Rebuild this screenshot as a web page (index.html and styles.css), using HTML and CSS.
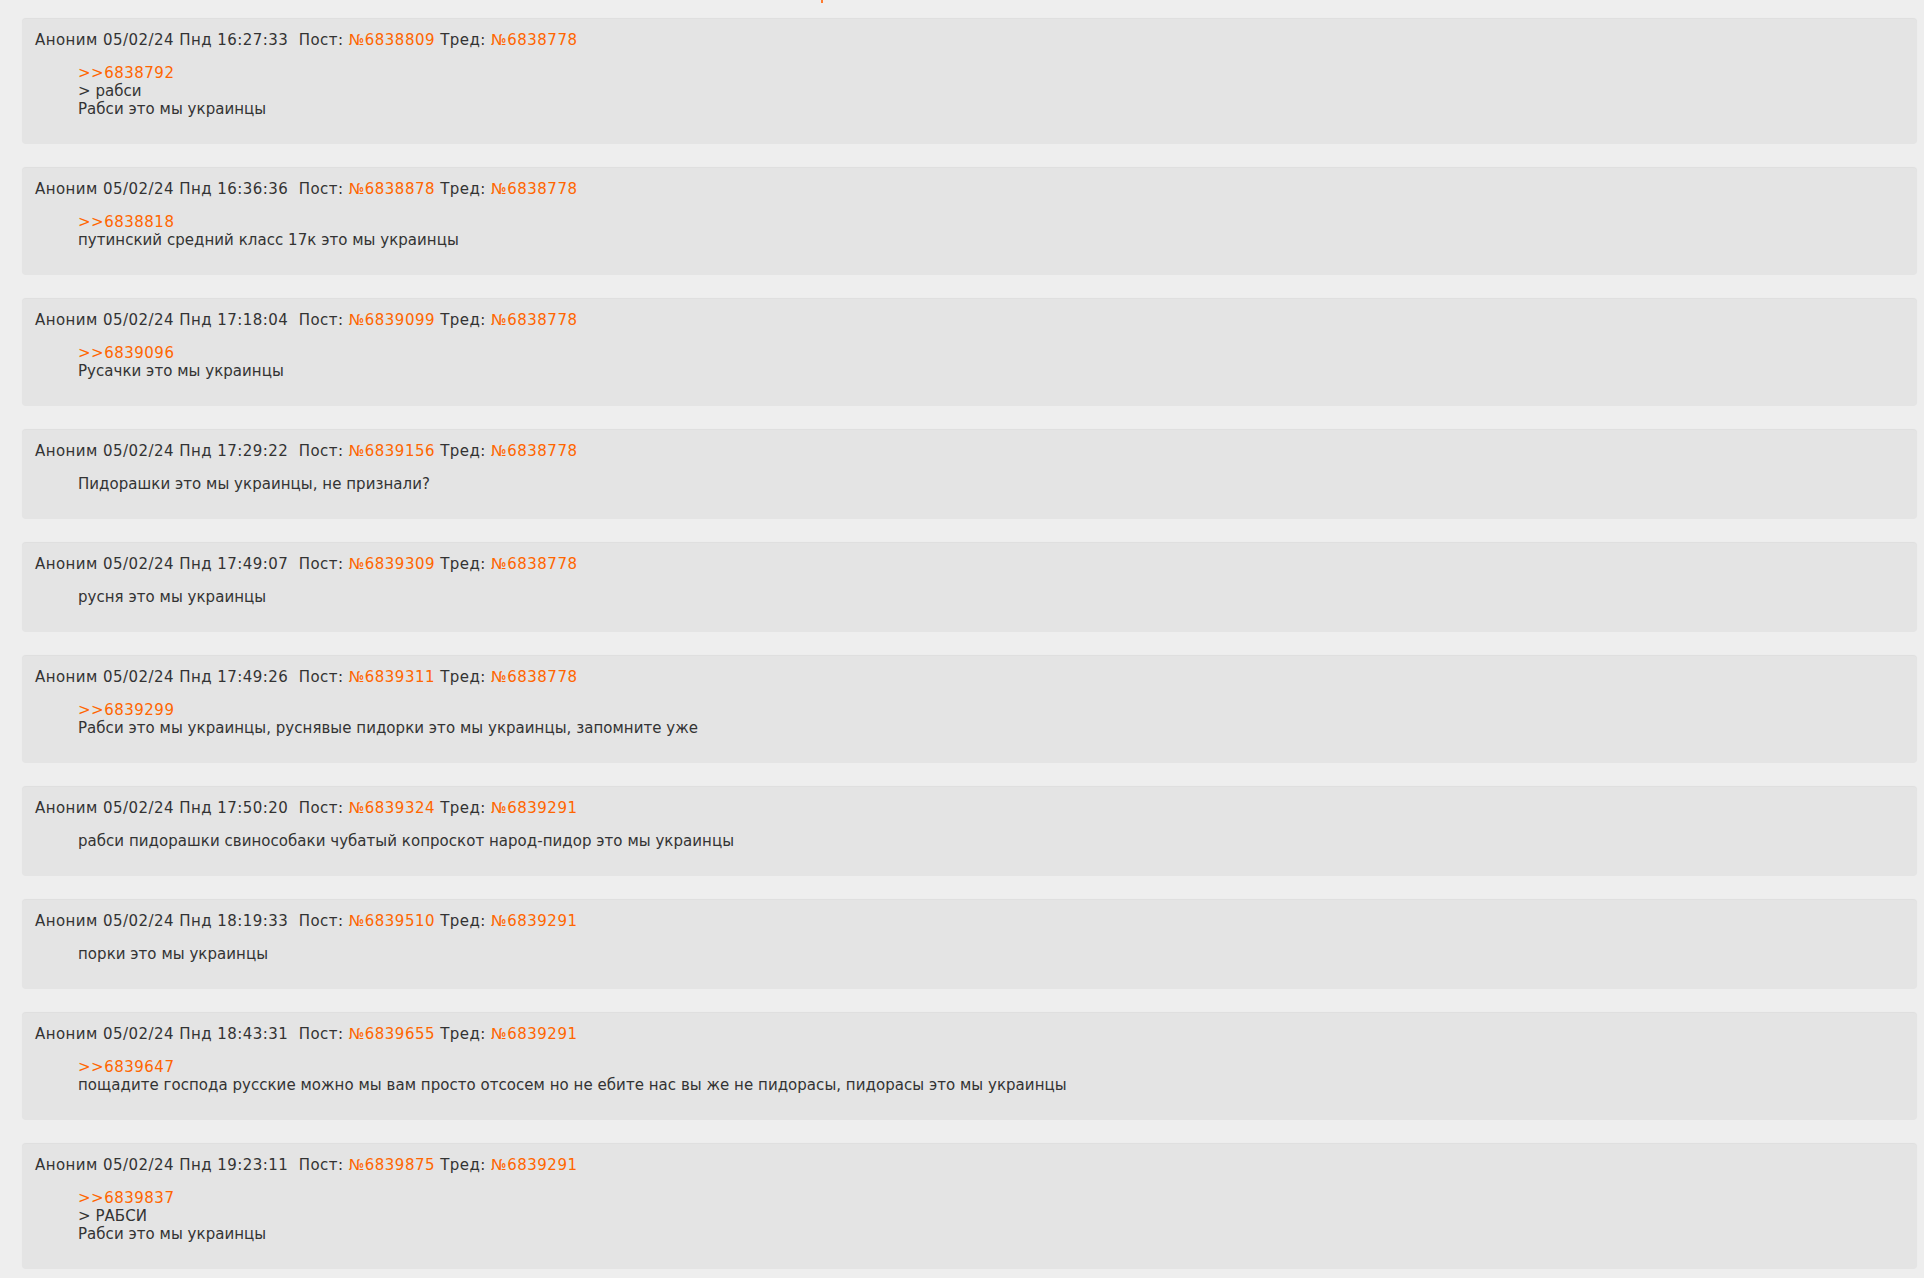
FILE: index.html
```html
<!DOCTYPE html>
<html lang="ru">
<head>
<meta charset="utf-8">
<title>Посты</title>
<link rel="stylesheet" href="styles.css">
</head>
<body>
<span class="top-mark"></span>
<div class="posts">
  <div class="post">
    <div class="post-head">Аноним 05/02/24 Пнд 16:27:33&nbsp; Пост: <a class="link">№6838809</a> Тред: <a class="link">№6838778</a></div>
    <div class="post-body">
      <a class="link">&gt;&gt;6838792</a><br>
      &gt; рабси<br>
      Рабси это мы украинцы
    </div>
  </div>
  <div class="post">
    <div class="post-head">Аноним 05/02/24 Пнд 16:36:36&nbsp; Пост: <a class="link">№6838878</a> Тред: <a class="link">№6838778</a></div>
    <div class="post-body">
      <a class="link">&gt;&gt;6838818</a><br>
      путинский средний класс 17к это мы украинцы
    </div>
  </div>
  <div class="post">
    <div class="post-head">Аноним 05/02/24 Пнд 17:18:04&nbsp; Пост: <a class="link">№6839099</a> Тред: <a class="link">№6838778</a></div>
    <div class="post-body">
      <a class="link">&gt;&gt;6839096</a><br>
      Русачки это мы украинцы
    </div>
  </div>
  <div class="post">
    <div class="post-head">Аноним 05/02/24 Пнд 17:29:22&nbsp; Пост: <a class="link">№6839156</a> Тред: <a class="link">№6838778</a></div>
    <div class="post-body">
      Пидорашки это мы украинцы, не признали?
    </div>
  </div>
  <div class="post">
    <div class="post-head">Аноним 05/02/24 Пнд 17:49:07&nbsp; Пост: <a class="link">№6839309</a> Тред: <a class="link">№6838778</a></div>
    <div class="post-body">
      русня это мы украинцы
    </div>
  </div>
  <div class="post">
    <div class="post-head">Аноним 05/02/24 Пнд 17:49:26&nbsp; Пост: <a class="link">№6839311</a> Тред: <a class="link">№6838778</a></div>
    <div class="post-body">
      <a class="link">&gt;&gt;6839299</a><br>
      Рабси это мы украинцы, руснявые пидорки это мы украинцы, запомните уже
    </div>
  </div>
  <div class="post">
    <div class="post-head">Аноним 05/02/24 Пнд 17:50:20&nbsp; Пост: <a class="link">№6839324</a> Тред: <a class="link">№6839291</a></div>
    <div class="post-body">
      рабси пидорашки свинособаки чубатый копроскот народ-пидор это мы украинцы
    </div>
  </div>
  <div class="post">
    <div class="post-head">Аноним 05/02/24 Пнд 18:19:33&nbsp; Пост: <a class="link">№6839510</a> Тред: <a class="link">№6839291</a></div>
    <div class="post-body">
      порки это мы украинцы
    </div>
  </div>
  <div class="post">
    <div class="post-head">Аноним 05/02/24 Пнд 18:43:31&nbsp; Пост: <a class="link">№6839655</a> Тред: <a class="link">№6839291</a></div>
    <div class="post-body">
      <a class="link">&gt;&gt;6839647</a><br>
      пощадите господа русские можно мы вам просто отсосем но не ебите нас вы же не пидорасы, пидорасы это мы украинцы
    </div>
  </div>
  <div class="post">
    <div class="post-head">Аноним 05/02/24 Пнд 19:23:11&nbsp; Пост: <a class="link">№6839875</a> Тред: <a class="link">№6839291</a></div>
    <div class="post-body">
      <a class="link">&gt;&gt;6839837</a><br>
      &gt; РАБСИ<br>
      Рабси это мы украинцы
    </div>
  </div>
</div>
</body>
</html>
```
FILE: styles.css
```css
html, body {
  margin: 0;
  background: #eeeeee;
}
body {
  font-family: "DejaVu Sans", Verdana, sans-serif;
  font-size: 15px;
  line-height: 18px;
  color: #333333;
  position: relative;
}
.top-mark {
  position: absolute;
  left: 821px;
  top: 0;
  width: 2px;
  height: 3px;
  background: #ff7a2e;
}
.posts {
  display: flex;
  flex-direction: column;
  gap: 24px;
  padding: 19px 7px 8px 22px;
}
.post {
  background: #e4e4e4;
  border-radius: 4px;
  box-shadow: 0 -1px 1px rgba(0, 0, 0, 0.07);
  padding: 12px 13px 26px 13px;
}
.post-head {
  white-space: nowrap;
  letter-spacing: 0.45px;
}
.post-body {
  margin-top: 15px;
  padding-left: 43px;
  letter-spacing: 0.04px;
}
.link {
  color: #ff6600;
  text-decoration: none;
  letter-spacing: 0.5px;
}
```
